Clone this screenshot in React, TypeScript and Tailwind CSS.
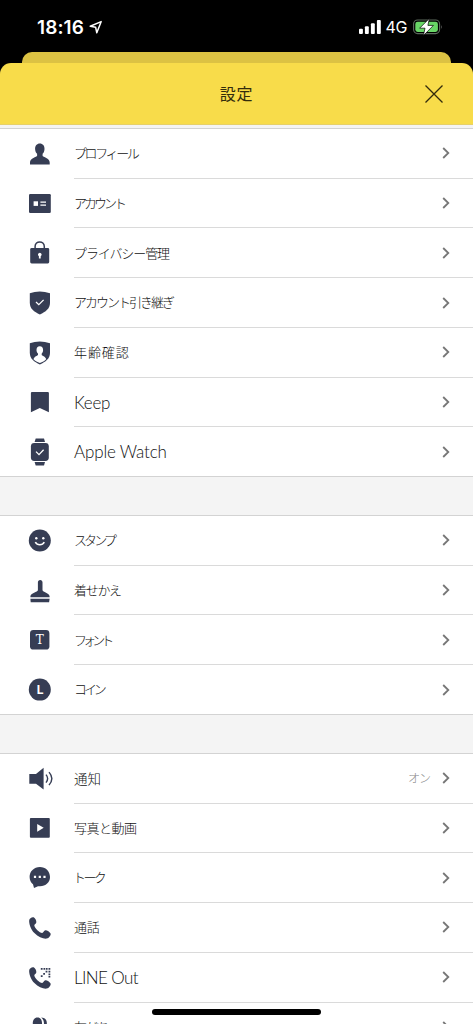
import type { ReactNode } from 'react';
import clsx from 'clsx';

type Item = {
    label: string;
    icon: ReactNode;
    text: string;
    value?: string;
};

const navy = '#363d54';

const shield = 'M3.8 4.2Q8.5 2.5 13.8 2.5Q19 2.5 24 4.2V13.8C24 19.8 19.6 22.8 13.9 25.5C8 22.8 3.8 19.8 3.8 13.8Z';
const handset = 'M3.2 6.2C3.5 4.2 6 2.7 7.7 3.3C9.3 4 10.6 7 10.3 8.4C10 9.8 8.3 10.3 8.3 11.4C8.6 14 13.8 19 16.2 18.9C17.3 18.8 17.8 16.6 19.4 16.2C20.8 16 24 18 24.6 19.5C25.2 21.3 22.8 24.2 20.8 24.6C17.5 25.1 12.4 23.2 8.4 19.1C4.7 15.3 2.8 9.5 3.2 6.2Z';

const icons = {
    profile: (
        <path d="M13.8 3.5C10.9 3.5 9 5.8 9.1 9C9.2 11.3 10 12.8 11.1 13.8V16.1C10.8 17 4 18.2 4 22.5V24.5H23.7V22.5C23.7 18.2 16.9 17 16.6 16.1V13.8C17.7 12.8 18.4 11.3 18.5 9C18.6 5.8 16.8 3.5 13.8 3.5Z" />
    ),
    account: (
        <>
            <rect x="3" y="4" width="21.8" height="19" rx="1.2" />
            <rect x="7.6" y="11.3" width="4.4" height="4.6" fill="#fff" />
            <path d="M14.4 12.1H20M14.4 15.1H20" stroke="#fff" strokeWidth="1.1" />
        </>
    ),
    lock: (
        <>
            <path d="M9.1 9.5V7.5C9.1 1.4 18.3 1.4 18.3 7.5V9.5" fill="none" stroke={navy} strokeWidth="1.5" />
            <rect x="4.2" y="9" width="19" height="15.4" rx="1.4" />
            <path d="M13.8 13.7A1.9 1.9 0 0 0 12.9 17.2V19.6H14.7V17.2A1.9 1.9 0 0 0 13.8 13.7Z" fill="#fff" />
        </>
    ),
    shield: (
        <>
            <path d={shield} />
            <path d="M10 13L12.8 15.7L17.6 10.9" fill="none" stroke="#fff" strokeWidth="1.3" />
        </>
    ),
    age: (
        <>
            <path d={shield} />
            <path d="M13.8 7.2C11.6 7.2 10.5 8.8 10.5 11C10.5 12.7 11.2 13.8 12 14.5V16C11.6 16.9 8.3 17.2 7.5 20.3C9.3 22 11.5 23 13.9 24.1C16.3 23 18.5 22 20.2 20.3C19.4 17.2 16 16.9 15.7 16V14.5C16.5 13.8 17.1 12.7 17.1 11C17.1 8.8 16 7.2 13.8 7.2Z" fill="#fff" />
        </>
    ),
    keep: <path d="M6 4H21.8Q22.9 4 22.9 5V24.2L13.8 20L4.9 24.2V5Q4.9 4 6 4Z" />,
    watch: (
        <>
            <path d="M9.7.5H18L19 4.1H8.6ZM8.6 24H19L18 27.4H9.7Z" />
            <rect x="4.9" y="5" width="17.9" height="18" rx="3.4" />
            <path d="M10 13.6L13 16.6L17.6 11.8" fill="none" stroke="#fff" strokeWidth="1.3" />
        </>
    ),
    smile: (
        <>
            <circle cx="13.8" cy="13.5" r="11" />
            <circle cx="10.3" cy="11.3" r="1.2" fill="#fff" />
            <circle cx="17.3" cy="11.3" r="1.2" fill="#fff" />
            <path d="M9.3 15.1C11.3 18.6 16.4 18.6 18.3 15.1" fill="none" stroke="#fff" strokeWidth="1.6" />
        </>
    ),
    brush: (
        <>
            <path d="M14.2 3C12.8 3 11.8 4 11.9 5.3V13.3C11.9 15 4.4 16.2 4.4 19.4V20.2H23.6V19.4C23.6 16.2 16.5 15 16.5 13.3V5.3C16.5 4 15.6 3 14.2 3Z" />
            <path d="M4.4 21.7H23.6L23.1 25.3H4.7Z" />
        </>
    ),
    font: (
        <>
            <rect x="4" y="4" width="19.4" height="19.6" rx="3.4" />
            <text x="13.7" y="18.1" textAnchor="middle" fill="#fff" className="font-['DejaVu_Serif',serif] text-[12px]">T</text>
        </>
    ),
    coin: (
        <>
            <circle cx="13.8" cy="13.6" r="11" />
            <text x="14.2" y="18" textAnchor="middle" fill="#fff" className="font-[Inter,sans-serif] text-[12px] font-bold">L</text>
        </>
    ),
    speaker: (
        <>
            <path d="M3.3 9H10L17.6 2.7V24.5L10 18.7H3.3Z" />
            <path d="M20 9.6Q23.3 13.5 20 17.6M23 7.1Q28.7 13.5 23 20.1" fill="none" stroke={navy} strokeWidth="1.4" />
        </>
    ),
    media: (
        <>
            <rect x="3.9" y="4" width="19.9" height="19.8" rx="1" />
            <path d="M11.2 9.9L17.7 13.8L11.2 17.7Z" fill="#fff" />
        </>
    ),
    talk: (
        <>
            <path d="M13.9 3C8 3 3.6 7.4 3.6 13C3.6 16.3 5 18.7 7 20.3L8 24L12 22.2H14C19.8 22.1 24 18.4 24 13C24 7.1 19.5 3 13.9 3Z" />
            <path d="M7.9 11.7H10.1V13.9H7.9ZM12.7 11.7H14.9V13.9H12.7ZM17.4 11.7H19.6V13.9H17.4Z" fill="#fff" />
        </>
    ),
    call: <path d={handset} />,
    lineOut: (
        <>
            <path d={handset} />
            <path d="M14.8 4H16.6V5.8H14.8ZM17.5 4H19.3V5.8H17.5ZM20 4H21.6V5.8H20ZM22.5 4H24.3V5.8H22.5ZM19.6 6.8H21.4V8.6H19.6ZM22.5 6.8H24.3V8.6H22.5ZM17.2 9H19V10.8H17.2ZM22.5 9.4H24.3V11.2H22.5ZM14.8 11.3H16.6V13.1H14.8ZM22.5 12H24.3V13.6H22.5Z" />
        </>
    ),
    friends: (
        <path d="M11.5 4.4C8.4 4.4 6.8 7 6.8 10V17L2 22V26H20V22L16 17V10C16 7 14.6 4.4 11.5 4.4ZM15.2 4.5C20.6 4.6 21.8 9 20.2 14L25 21V25H22L17.5 15C18.6 10.5 18 6.5 15.2 4.5Z" />
    ),
};

const sections: Item[][] = [
    [
        { label: 'プロフィール', icon: icons.profile, text: 'text-[13px] tracking-[-2.4px]' },
        { label: 'アカウント', icon: icons.account, text: 'text-[13px] tracking-[-3px]' },
        { label: 'プライバシー管理', icon: icons.lock, text: 'text-[13px] tracking-[-1.1px]' },
        { label: 'アカウント引き継ぎ', icon: icons.shield, text: 'text-[13px] tracking-[-2px]' },
        { label: '年齢確認', icon: icons.age, text: 'text-[13px] tracking-[0.9px]' },
        { label: 'Keep', icon: icons.keep, text: 'font-[Lato,sans-serif] text-[17px] tracking-[-0.3px]' },
        { label: 'Apple Watch', icon: icons.watch, text: 'font-[Lato,sans-serif] text-[17px] tracking-[-0.15px]' },
    ],
    [
        { label: 'スタンプ', icon: icons.smile, text: 'text-[13px] tracking-[-2.9px]' },
        { label: '着せかえ', icon: icons.brush, text: 'text-[13px] tracking-[-1.3px]' },
        { label: 'フォント', icon: icons.font, text: 'text-[13px] tracking-[-3.9px]' },
        { label: 'コイン', icon: icons.coin, text: 'text-[13px] tracking-[-3.1px]' },
    ],
    [
        { label: '通知', icon: icons.speaker, text: 'text-[13.5px] tracking-[0.1px]', value: 'オン' },
        { label: '写真と動画', icon: icons.media, text: 'text-[13px] tracking-[-0.5px]' },
        { label: 'トーク', icon: icons.talk, text: 'text-[13px] tracking-[-2.6px] -ml-px' },
        { label: '通話', icon: icons.call, text: 'text-[13px] tracking-[-0.2px]' },
        { label: 'LINE Out', icon: icons.lineOut, text: 'font-[Lato,sans-serif] text-[17px] tracking-[-0.6px]' },
        { label: '友だち', icon: icons.friends, text: 'text-[13px] tracking-[-1.8px]' },
    ],
];

function StatusBar() {
    return (
        <div className="flex h-[52px] items-center pt-[2px] pl-[37px] pr-[30px] text-white">
            <span className="text-[19px] leading-none font-semibold tracking-[0.1px]">18:16</span>
            <svg className="ml-[5px] h-[14px] w-[14px]" viewBox="0 0 14 14" fill="none" stroke="#fff" strokeWidth="1.5" strokeLinejoin="round">
                <path d="M12.2 1.6L1.2 6.3L6.6 7.2L7.8 12.8Z" />
            </svg>
            <svg className="ml-auto h-[14px] w-[22px]" viewBox="0 0 22 14" fill="#fff">
                <rect x="0" y="8.8" width="3.9" height="5.2" rx="1" />
                <rect x="5.9" y="6.2" width="3.9" height="7.8" rx="1" />
                <rect x="11.9" y="3.2" width="3.9" height="10.8" rx="1" />
                <rect x="17.9" y="0" width="3.9" height="14" rx="1" />
            </svg>
            <span className="ml-[5px] text-[16px] leading-none tracking-[-0.4px]">4G</span>
            <svg className="ml-[6px] h-[18px] w-[30px]" viewBox="0 0 30 18">
                <rect x=".6" y="2" width="26" height="13.6" rx="4" fill="none" stroke="#5d6a5d" strokeWidth="1.1" />
                <rect x="2.3" y="3.7" width="22.6" height="10.2" rx="2.4" fill="#68d566" />
                <path d="M28.1 7V11Q29.7 9 28.1 7Z" fill="#6e6e6e" />
                <path d="M16.4 .4L6.6 10.2H12L10.4 17.6L20.4 7.4H14.9Z" fill="#fff" stroke="#000" strokeWidth=".7" />
            </svg>
        </div>
    );
}

function Row({ item, last }: { item: Item; last: boolean }) {
    return (
        <div className={clsx('flex h-[49.72px] shrink-0 pl-[26px]', last && 'border-b border-[#d3d3d3]')}>
            <svg className="mt-[10.8px] h-7 w-7 shrink-0" viewBox="0 0 28 28" fill={navy}>
                {item.icon}
            </svg>
            <div className={clsx('ml-5 flex flex-1 items-center pr-[23px]', !last && 'border-b border-[#dadada]')}>
                <span className={clsx('pt-px font-light whitespace-nowrap text-[#111]', item.text)}>{item.label}</span>
                {item.value && <span className="ml-auto pt-[2px] text-[12px] font-light tracking-[-1px] text-[#888]">{item.value}</span>}
                <svg className={clsx('h-3 w-2', item.value ? 'ml-[12px]' : 'ml-auto')} viewBox="0 0 8 12" fill="none" stroke="#777" strokeWidth="1.8">
                    <path d="M1.2 1L6.3 6L1.2 11" />
                </svg>
            </div>
        </div>
    );
}

export default function App() {
    return (
        <div className="relative flex h-[1024px] w-full flex-col overflow-hidden bg-black font-[Inter,'Noto_Sans_CJK_JP',sans-serif]">
            <StatusBar />
            <div className="mx-[22px] h-[11px] shrink-0 rounded-t-[10px] bg-[#dcc243]" />
            <header className="grid h-[62px] shrink-0 grid-cols-3 items-center rounded-t-[11px] border-b border-[#e6d06a] bg-[#f8dc4a]">
                <h1 className="col-start-2 pt-px text-center text-[16px] tracking-[0.7px] text-[#332c0c]">設定</h1>
                <svg className="mr-[30px] h-[18px] w-[18px] justify-self-end" viewBox="0 0 18 18" stroke="#332c0c" strokeWidth="1.3">
                    <path d="M.5.5L17.5 17.5M17.5.5L.5 17.5" />
                </svg>
            </header>
            <main className="flex flex-1 flex-col gap-[38px] overflow-hidden bg-[#f4f4f4] pt-[3px]">
                {sections.map((items, i) => (
                    <section key={i} className="shrink-0 border-t border-[#d3d3d3] bg-white">
                        {items.map((item, j) => (
                            <Row key={item.label} item={item} last={j === items.length - 1} />
                        ))}
                    </section>
                ))}
            </main>
            <div className="absolute top-[1009px] left-[152px] h-[6px] w-[169px] rounded-full bg-black" />
        </div>
    );
}
